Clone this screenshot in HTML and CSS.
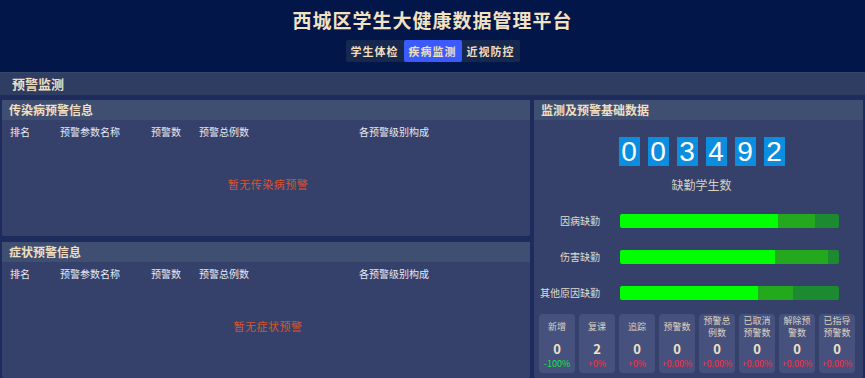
FILE: index.html
```html
<!DOCTYPE html>
<html lang="zh-CN">
<head>
    <meta charset="UTF-8">
    <meta name="viewport" content="width=device-width, initial-scale=1.0">
    <title>西城区学生大健康数据管理平台</title>
    <link rel="stylesheet" href="styles.css">
</head>
<body>
    <div class="header">
        <div class="title">西城区学生大健康数据管理平台</div>
        <div class="tabs">
            <span class="tab">学生体检</span>
            <span class="tab active">疾病监测</span>
            <span class="tab">近视防控</span>
        </div>
    </div>

    <div class="section-bar">预警监测</div>

    <div class="main">
        <div class="left-col">
            <div class="panel">
                <div class="panel-head">传染病预警信息</div>
                <div class="panel-body">
                    <div class="table-head">
                        <span class="c-rank">排名</span>
                        <span class="c-name">预警参数名称</span>
                        <span class="c-num">预警数</span>
                        <span class="c-total">预警总例数</span>
                        <span class="c-level">各预警级别构成</span>
                    </div>
                    <div class="empty">暂无传染病预警</div>
                </div>
            </div>
            <div class="panel">
                <div class="panel-head">症状预警信息</div>
                <div class="panel-body">
                    <div class="table-head">
                        <span class="c-rank">排名</span>
                        <span class="c-name">预警参数名称</span>
                        <span class="c-num">预警数</span>
                        <span class="c-total">预警总例数</span>
                        <span class="c-level">各预警级别构成</span>
                    </div>
                    <div class="empty">暂无症状预警</div>
                </div>
            </div>
        </div>

        <div class="panel right-panel">
            <div class="panel-head">监测及预警基础数据</div>
            <div class="panel-body">
                <div class="digits">
                    <span class="digit">0</span>
                    <span class="digit">0</span>
                    <span class="digit">3</span>
                    <span class="digit">4</span>
                    <span class="digit">9</span>
                    <span class="digit">2</span>
                </div>
                <div class="digits-label">缺勤学生数</div>

                <div class="bars">
                    <div class="bar-row">
                        <span class="bar-label">因病缺勤</span>
                        <div class="bar">
                            <span class="seg seg-a" style="width: 72%"></span>
                            <span class="seg seg-b" style="width: 17%"></span>
                            <span class="seg seg-c" style="width: 11%"></span>
                        </div>
                    </div>
                    <div class="bar-row">
                        <span class="bar-label">伤害缺勤</span>
                        <div class="bar">
                            <span class="seg seg-a" style="width: 71%"></span>
                            <span class="seg seg-b" style="width: 24%"></span>
                            <span class="seg seg-c" style="width: 5%"></span>
                        </div>
                    </div>
                    <div class="bar-row">
                        <span class="bar-label">其他原因缺勤</span>
                        <div class="bar">
                            <span class="seg seg-a" style="width: 63%"></span>
                            <span class="seg seg-b" style="width: 16%"></span>
                            <span class="seg seg-c" style="width: 21%"></span>
                        </div>
                    </div>
                </div>

                <div class="cards">
                    <div class="card">
                        <div class="card-label">新增</div>
                        <div class="card-value">0</div>
                        <div class="card-pct down">-100%</div>
                    </div>
                    <div class="card">
                        <div class="card-label">复课</div>
                        <div class="card-value">2</div>
                        <div class="card-pct up">+0%</div>
                    </div>
                    <div class="card">
                        <div class="card-label">追踪</div>
                        <div class="card-value">0</div>
                        <div class="card-pct up">+0%</div>
                    </div>
                    <div class="card">
                        <div class="card-label">预警数</div>
                        <div class="card-value">0</div>
                        <div class="card-pct up">+0.00%</div>
                    </div>
                    <div class="card">
                        <div class="card-label">预警总<br>例数</div>
                        <div class="card-value">0</div>
                        <div class="card-pct up">+0.00%</div>
                    </div>
                    <div class="card">
                        <div class="card-label">已取消<br>预警数</div>
                        <div class="card-value">0</div>
                        <div class="card-pct up">+0.00%</div>
                    </div>
                    <div class="card">
                        <div class="card-label">解除预<br>警数</div>
                        <div class="card-value">0</div>
                        <div class="card-pct up">+0.00%</div>
                    </div>
                    <div class="card">
                        <div class="card-label">已指导<br>预警数</div>
                        <div class="card-value">0</div>
                        <div class="card-pct up">+0.00%</div>
                    </div>
                </div>
            </div>
        </div>
    </div>
</body>
</html>
```

FILE: styles.css
```css
body {
    margin: 0;
    padding: 0;
    background-color: #1e2b5d;
    color: #f0dfc0;
    font-family: "Noto Sans CJK SC", "Noto Sans", sans-serif;
    height: 378px;
    overflow: hidden;
}
.header {
    height: 72px;
    background-color: #02164a;
    display: flex;
    flex-direction: column;
    align-items: center;
    box-sizing: border-box;
    padding-top: 6px;
}
.title {
    font-size: 19px;
    font-weight: bold;
    line-height: 28px;
    letter-spacing: 1px;
    color: #f2e2c2;
}
.tabs {
    margin-top: 6px;
    display: flex;
    background-color: #17284f;
    border-radius: 2px;
    height: 22px;
}
.tab {
    width: 58px;
    text-align: center;
    font-size: 11px;
    font-weight: bold;
    line-height: 22px;
    letter-spacing: 1px;
    color: #f0dfc0;
    border-radius: 2px;
}
.tab.active {
    background-color: #3a5bff;
}
.section-bar {
    height: 22px;
    line-height: 22px;
    background-color: #2f3d62;
    border-top: 1px solid #37466b;
    padding-left: 12px;
    font-size: 13px;
    font-weight: bold;
    color: #f0dfc0;
}
.main {
    display: flex;
    gap: 4px;
    padding: 5px 2px 0 2px;
    height: 283px;
    box-sizing: border-box;
}
.left-col {
    width: 528px;
    display: flex;
    flex-direction: column;
    gap: 6px;
}
.panel {
    flex: 1;
    display: flex;
    flex-direction: column;
    background-color: #35416b;
    border-radius: 2px;
}
.panel-head {
    height: 20px;
    line-height: 20px;
    background-color: #3f4f71;
    padding-left: 7px;
    font-size: 12px;
    font-weight: bold;
    color: #f0dfc0;
}
.panel-body {
    flex: 1;
    display: flex;
    flex-direction: column;
}
.table-head {
    display: flex;
    font-size: 10px;
    color: #e6e8f2;
    padding-top: 5px;
    line-height: 14px;
}
.c-rank { margin-left: 8px; width: 50px; }
.c-name { width: 91px; }
.c-num { width: 48px; }
.c-total { width: 160px; }
.empty {
    flex: 1;
    display: flex;
    align-items: center;
    justify-content: center;
    padding-left: 4px;
    padding-bottom: 8px;
    font-size: 11px;
    letter-spacing: 0.5px;
    color: #d8542c;
}
.right-panel {
    flex: 1;
}
.digits {
    display: flex;
    justify-content: center;
    gap: 8px;
    margin-top: 17px;
    padding-left: 6px;
}
.digit {
    width: 21px;
    height: 29px;
    line-height: 29px;
    text-align: center;
    background-color: #0b8ee0;
    color: #fff;
    font-family: "Liberation Sans", Arial, sans-serif;
    font-size: 28px;
}
.digits-label {
    text-align: center;
    margin-top: 10px;
    font-size: 12px;
    color: #d8d0c0;
    padding-left: 6px;
}
.bars {
    margin-top: 21px;
    display: flex;
    flex-direction: column;
    gap: 22px;
}
.bar-row {
    display: flex;
    align-items: center;
    padding-right: 24px;
}
.bar-label {
    width: 66px;
    text-align: right;
    font-size: 10px;
    line-height: 14px;
    color: #e2dacb;
    margin-right: 20px;
}
.bar {
    flex: 1;
    height: 14px;
    display: flex;
    border-radius: 2px;
    overflow: hidden;
}
.seg { display: block; height: 100%; }
.seg-a { background-color: #00ff00; }
.seg-b { background-color: #24a81d; }
.seg-c { background-color: #1c8a30; }
.cards {
    display: flex;
    gap: 4px;
    padding: 0 8px 0 5px;
    margin-top: 14px;
}
.card {
    flex: 1;
    height: 59px;
    background-color: #46517d;
    border-radius: 4px;
    display: flex;
    flex-direction: column;
    align-items: center;
    box-sizing: border-box;
    padding-top: 1px;
}
.card-label {
    height: 24px;
    display: flex;
    align-items: center;
    text-align: center;
    font-size: 9px;
    line-height: 12px;
    color: #dcd3c2;
}
.card-value {
    margin-top: 1px;
    font-size: 13px;
    font-weight: bold;
    line-height: 18px;
    color: #f2e2c2;
}
.card-pct {
    font-size: 9px;
    line-height: 12px;
}
.card-pct.down { color: #19e04a; }
.card-pct.up { color: #ff2a40; }
```
